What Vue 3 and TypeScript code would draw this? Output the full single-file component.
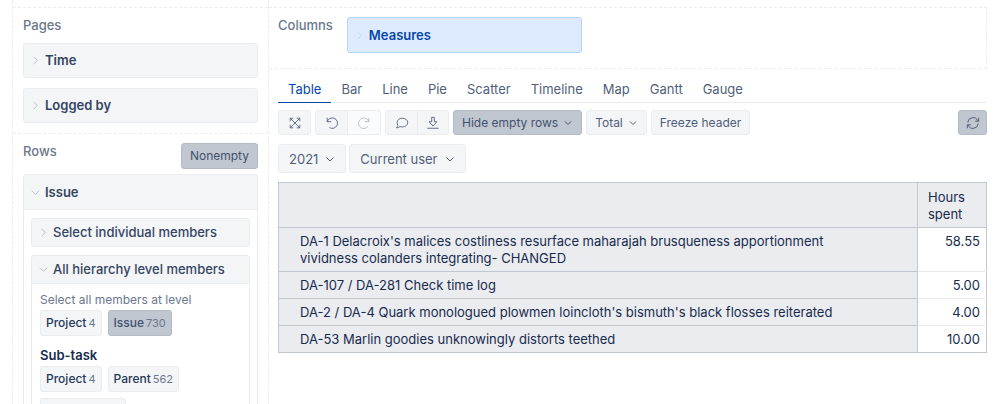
<script setup lang="ts">
import { ref } from 'vue'

interface Level {
  name: string
  count: number
}

interface ResultRow {
  label: string
  hours: string
}

const pages: string[] = ['Time', 'Logged by']
const issueLevels: Level[] = [
  { name: 'Project', count: 4 },
  { name: 'Issue', count: 730 },
]
const subTaskLevels: Level[] = [
  { name: 'Project', count: 4 },
  { name: 'Parent', count: 562 },
]
const selectedLevel = ref('Issue')

const views: string[] = ['Table', 'Bar', 'Line', 'Pie', 'Scatter', 'Timeline', 'Map', 'Gantt', 'Gauge']
const activeView = ref('Table')
const filters: string[] = ['2021', 'Current user']

const rows: ResultRow[] = [
  {
    label:
      "DA-1 Delacroix's malices costliness resurface maharajah brusqueness apportionment vividness colanders integrating- CHANGED",
    hours: '58.55',
  },
  { label: 'DA-107 / DA-281 Check time log', hours: '5.00' },
  { label: "DA-2 / DA-4 Quark monologued plowmen loincloth's bismuth's black flosses reiterated", hours: '4.00' },
  { label: 'DA-53 Marlin goodies unknowingly distorts teethed', hours: '10.00' },
]
</script>

<template>
  <div class="report">
    <aside class="sidebar">
      <section class="zone">
        <h2 class="zone-title">Pages</h2>
        <button v-for="page in pages" :key="page" type="button" class="dimension">
          <svg class="chevron" viewBox="0 0 10 10"><path d="M3 1l4 4-4 4" /></svg>
          {{ page }}
        </button>
      </section>

      <section class="zone rows-zone">
        <div class="zone-head">
          <h2 class="zone-title">Rows</h2>
          <button type="button" class="btn nonempty pressed">Nonempty</button>
        </div>
        <div class="panel">
          <button type="button" class="panel-head">
            <svg class="chevron" viewBox="0 0 10 10"><path d="M1 3l4 4 4-4" /></svg>
            Issue
          </button>
          <div class="panel-body">
            <button type="button" class="group">
              <svg class="chevron" viewBox="0 0 10 10"><path d="M3 1l4 4-4 4" /></svg>
              Select individual members
            </button>
            <div class="group-open">
              <button type="button" class="group-head">
                <svg class="chevron" viewBox="0 0 10 10"><path d="M1 3l4 4 4-4" /></svg>
                All hierarchy level members
              </button>
              <div class="levels">
                <p class="hint">Select all members at level</p>
                <div class="level-list">
                  <button
                    v-for="level in issueLevels"
                    :key="level.name"
                    type="button"
                    class="btn level"
                    :class="{ pressed: level.name === selectedLevel }"
                    @click="selectedLevel = level.name"
                  >
                    {{ level.name }}<span class="count">{{ level.count }}</span>
                  </button>
                </div>
                <h3 class="hierarchy">Sub-task</h3>
                <div class="level-list">
                  <button v-for="level in subTaskLevels" :key="level.name" type="button" class="btn level">
                    {{ level.name }}<span class="count">{{ level.count }}</span>
                  </button>
                  <button type="button" class="btn level more" aria-label="More levels"></button>
                </div>
              </div>
            </div>
          </div>
        </div>
      </section>
    </aside>

    <main class="content">
      <section class="columns">
        <h2 class="zone-title">Columns</h2>
        <button type="button" class="dimension measures">
          <svg class="chevron" viewBox="0 0 10 10"><path d="M3 1l4 4-4 4" /></svg>
          Measures
        </button>
      </section>

      <section class="result">
        <nav class="tabs">
          <button
            v-for="view in views"
            :key="view"
            type="button"
            class="tab"
            :class="{ active: view === activeView }"
            @click="activeView = view"
          >
            {{ view }}
          </button>
        </nav>

        <div class="toolbar">
          <button type="button" class="btn tool wide" aria-label="Full screen">
            <svg class="icon" viewBox="0 0 16 16">
              <path d="M2.500 2.500l11 11M13.500 2.500l-11 11M2.500 6V2.500H6M10 2.500h3.500V6M13.500 10v3.500H10M6 13.500H2.500V10" />
            </svg>
          </button>
          <div class="joined">
            <button type="button" class="btn tool wide" aria-label="Undo">
              <svg class="icon" viewBox="0 0 16 16">
                <path d="M2.500 2v4.500H7M2.500 6.500A6 6 0 1 1 5 13.200" />
              </svg>
            </button>
            <button type="button" class="btn tool wide" aria-label="Redo" disabled>
              <svg class="icon" viewBox="0 0 16 16">
                <path d="M13.500 2v4.500H9M13.500 6.500A6 6 0 1 0 12.500 12" />
              </svg>
            </button>
          </div>
          <div class="joined">
            <button type="button" class="btn tool wide" aria-label="Comment">
              <svg class="icon" viewBox="0 0 16 16">
                <path d="M8.500 2.500c3.600 0 6 2.200 6 5s-2.400 5-6 5c-1 0-1.900-.2-2.700-.5-1 .9-2.300 1.500-4.100 1.500 1-.9 1.500-1.900 1.600-2.900-.6-.9-.9-1.900-.9-3.100 0-2.800 2.500-5 6.100-5z" />
              </svg>
            </button>
            <button type="button" class="btn tool" aria-label="Export">
              <svg class="icon" viewBox="0 0 16 16">
                <path d="M6.500 1.500h3V6.500h3L8 11.500 3.500 6.500h3zM1.500 14h13" />
              </svg>
            </button>
          </div>
          <button type="button" class="btn pressed">
            Hide empty rows
            <svg class="caret" viewBox="0 0 10 10"><path d="M2 3.500l3 3 3-3" /></svg>
          </button>
          <button type="button" class="btn">
            Total
            <svg class="caret" viewBox="0 0 10 10"><path d="M2 3.500l3 3 3-3" /></svg>
          </button>
          <button type="button" class="btn">Freeze header</button>
          <button type="button" class="btn tool pressed refresh" aria-label="Refresh">
            <svg class="icon" viewBox="0 0 16 16">
              <path d="M14.500 2v4h-4M1.500 14v-4h4M2 7.500A6 6 0 0 1 13.500 5.500M14 8.500A6 6 0 0 1 2.500 10.500" />
            </svg>
          </button>
        </div>

        <div class="filters">
          <button v-for="filter in filters" :key="filter" type="button" class="btn filter">
            {{ filter }}
            <svg class="caret" viewBox="0 0 10 10"><path d="M1.500 3.500L5 7l3.500-3.500" /></svg>
          </button>
        </div>

        <table class="grid">
          <thead>
            <tr>
              <td class="corner"></td>
              <th scope="col">Hours spent</th>
            </tr>
          </thead>
          <tbody>
            <tr v-for="row in rows" :key="row.label">
              <th scope="row"><div class="row-label">{{ row.label }}</div></th>
              <td>{{ row.hours }}</td>
            </tr>
          </tbody>
        </table>
      </section>
    </main>
  </div>
</template>

<style>
body {
  margin: 0;
  background: #fff;
}
</style>

<style scoped>
.report {
  box-sizing: border-box;
  display: grid;
  grid-template-columns: 257px minmax(0, 1fr);
  height: 100vh;
  padding: 0 11px 0 12px;
  overflow: hidden;
  font-family: Inter, 'Liberation Sans', sans-serif;
  font-size: 13px;
  line-height: 17px;
  color: #172b4d;
}

.report *,
.report *::before {
  box-sizing: border-box;
}

button {
  margin: 0;
  font: inherit;
  color: inherit;
  cursor: pointer;
}

h2,
h3,
p {
  margin: 0;
}

svg {
  flex: none;
  fill: none;
  stroke: currentColor;
}

.sidebar {
  padding-top: 7px;
  border: 0 dashed #ebecf0;
  border-width: 0 1px;
}

.zone {
  display: flex;
  flex-direction: column;
  gap: 10px;
  padding: 9px 10px 10px;
  border-top: 1px dashed #ebecf0;
}

.zone-title {
  font-size: 13px;
  font-weight: 500;
  line-height: 16px;
  color: #6b778c;
}

.dimension,
.panel-head {
  display: flex;
  align-items: center;
  gap: 5px;
  width: 100%;
  height: 35px;
  padding: 0 7px;
  border: 1px solid #ebecf0;
  border-radius: 3px;
  background: #f4f5f7;
  font-weight: 600;
  color: #344563;
}

.chevron {
  width: 9px;
  height: 9px;
  color: #b3bac5;
}

.rows-zone {
  gap: 5px;
}

.zone-head {
  display: flex;
  justify-content: space-between;
}

.btn {
  display: flex;
  align-items: center;
  justify-content: center;
  gap: 5px;
  height: 25px;
  padding: 0 8px;
  border: 1px solid #ebecf0;
  border-radius: 3px;
  background: #f4f5f7;
  font-size: 12px;
  line-height: 16px;
  color: #505f79;
  white-space: nowrap;
}

.btn.pressed {
  border-color: #b3bac5;
  background: #c1c7d0;
  color: #42526e;
}

.btn.nonempty {
  height: 26px;
}

.panel-head {
  height: 36px;
  border-radius: 3px 3px 0 0;
}

.panel-body {
  display: flex;
  flex-direction: column;
  gap: 8px;
  padding: 8px 7px;
  border: 0 solid #ebecf0;
  border-width: 0 1px;
}

.group,
.group-head {
  display: flex;
  align-items: center;
  gap: 5px;
  width: 100%;
  height: 29px;
  padding: 0 7px;
  border: 1px solid #ebecf0;
  border-radius: 3px;
  background: #f4f5f7;
  font-weight: 500;
  color: #344563;
}

.group-head {
  border-radius: 3px 3px 0 0;
}

.levels {
  padding: 8px 8px;
  border: 0 solid #ebecf0;
  border-width: 0 1px;
}

.hint {
  font-size: 12px;
  line-height: 16px;
  color: #6b778c;
}

.level-list {
  display: flex;
  flex-wrap: wrap;
  gap: 6px;
  padding-top: 2px;
}

.btn.level {
  gap: 2px;
  height: 26px;
  padding: 0 5px;
  font-weight: 500;
}

.level:not(.pressed) {
  color: #253858;
}

.more {
  width: 86px;
}

.count {
  font-size: 11px;
  font-weight: 400;
  color: #6b778c;
}

.hierarchy {
  padding-top: 10px;
  font-size: 13px;
  font-weight: 600;
  line-height: 18px;
}

.content {
  min-width: 0;
  padding-top: 7px;
}

.columns {
  display: flex;
  gap: 14px;
  padding: 9px 9px 15px;
  border: 1px dashed #ebecf0;
  border-left: 0;
}

.dimension.measures {
  width: 235px;
  height: 36px;
  border-color: #b3d4ff;
  background: #deebff;
  color: #0747a6;
}

.measures .chevron {
  color: #b3d4ff;
}

.result {
  padding: 7px 0 0 9px;
}

.tabs {
  display: flex;
  border-bottom: 1px solid #ebecf0;
}

.tab {
  height: 27px;
  margin-bottom: -1px;
  padding: 0 10px;
  border: 0;
  border-bottom: 1px solid transparent;
  background: none;
  color: #505f79;
}

.tab.active {
  border-bottom-color: #0747a6;
  color: #0747a6;
}

.toolbar {
  display: flex;
  gap: 4px;
  padding: 7px 0 9px;
}

.joined {
  display: flex;
}

.joined .btn:first-child {
  border-radius: 3px 0 0 3px;
}

.joined .btn:last-child {
  border-left: 0;
  border-radius: 0 3px 3px 0;
}

.btn.tool {
  width: 31px;
  padding: 0;
}

.btn.wide {
  width: 33px;
}

.tool:disabled {
  background: #fafbfc;
  color: #b3bac5;
  cursor: default;
}

.btn.refresh {
  width: 29px;
  margin-left: auto;
}

.icon {
  width: 14px;
  height: 14px;
}

.caret {
  width: 10px;
  height: 10px;
}

.filters {
  display: flex;
  gap: 3px;
  padding-bottom: 9px;
}

.btn.filter {
  gap: 7px;
  height: 29px;
  padding: 0 10px;
  font-size: 13px;
}

.grid {
  width: 100%;
  border: 1px solid #c1c7d0;
  border-collapse: collapse;
}

.grid th,
.grid td {
  padding: 5px 10px 4px;
  border: 1px solid #c1c7d0;
  background: #ebecf0;
  font-weight: 400;
  text-align: left;
  vertical-align: top;
}

.grid thead th {
  width: 69px;
  padding: 6px 10px 4px;
}

.grid tbody th {
  padding-left: 21px;
}

.grid tbody td {
  padding-right: 6px;
  border-bottom-color: #ebecf0;
  background: #fff;
  text-align: right;
}

.grid tbody tr:last-child td {
  border-bottom-color: #c1c7d0;
}

.row-label {
  max-width: 560px;
}
</style>
